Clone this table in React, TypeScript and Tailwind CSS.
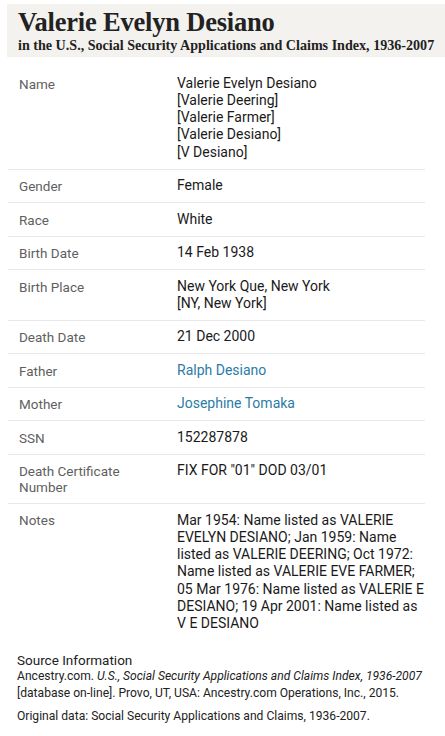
const rows: { label: string; value: string[]; link?: boolean }[] = [
  {
    label: "Name",
    value: [
      "Valerie Evelyn Desiano",
      "[Valerie Deering]",
      "[Valerie Farmer]",
      "[Valerie Desiano]",
      "[V Desiano]",
    ],
  },
  { label: "Gender", value: ["Female"] },
  { label: "Race", value: ["White"] },
  { label: "Birth Date", value: ["14 Feb 1938"] },
  { label: "Birth Place", value: ["New York Que, New York", "[NY, New York]"] },
  { label: "Death Date", value: ["21 Dec 2000"] },
  { label: "Father", value: ["Ralph Desiano"], link: true },
  { label: "Mother", value: ["Josephine Tomaka"], link: true },
  { label: "SSN", value: ["152287878"] },
  { label: "Death Certificate Number", value: ['FIX FOR "01" DOD 03/01'] },
];

const notes =
  "Mar 1954: Name listed as VALERIE EVELYN DESIANO; Jan 1959: Name listed as VALERIE DEERING; Oct 1972: Name listed as VALERIE EVE FARMER; 05 Mar 1976: Name listed as VALERIE E DESIANO; 19 Apr 2001: Name listed as V E DESIANO";

export default function App() {
  return (
    <div className="w-[445px] h-[736px] bg-white overflow-hidden font-['Roboto',Arial,sans-serif]">
      {/* Header */}
      <div className="ml-[7px] mt-[4px] h-[53px] bg-[#f4f2ef] pl-[11px] pt-[3px] text-[#222] font-['Liberation_Serif',serif] font-bold">
        <h1 className="text-[26.5px] leading-[30px] tracking-[-0.2px]">Valerie Evelyn Desiano</h1>
        <p className="whitespace-nowrap text-[14.1px] leading-[17px]">
          in the U.S., Social Security Applications and Claims Index, 1936-2007
        </p>
      </div>

      {/* Record table */}
      <div className="ml-[8px] w-[417px] mt-[10px]">
        {rows.map((r) => (
          <div key={r.label} className="flex border-b border-[#e8e8e8] py-[7.75px]">
            <div className="w-[169px] pl-[11px] pr-3 text-[13.5px] leading-[16px] text-[#5f5f5f] pt-[1px]">
              {r.label}
            </div>
            <div
              className={`flex-1 text-[14px] ${r.value.length > 2 ? "leading-[17.2px]" : "leading-[17px]"} ${
                r.link ? "text-[#2b7ca6]" : "text-[#1a1a1a]"
              }`}
            >
              {r.value.map((v) => (
                <div key={v}>{v}</div>
              ))}
            </div>
          </div>
        ))}
        <div className="flex py-[7.75px]">
          <div className="w-[169px] pl-[11px] text-[13.5px] leading-[16px] text-[#5f5f5f]">Notes</div>
          <div className="flex-1 text-[14px] leading-[17.2px] text-[#1a1a1a]">{notes}</div>
        </div>
      </div>

      {/* Source */}
      <div className="ml-[17px] mt-[12px] pr-3 text-[#222]">
        <div className="text-[13.5px] leading-[16px]">Source Information</div>
        <p className="text-[12.1px] leading-[17px]">
          Ancestry.com. <i>U.S., Social Security Applications and Claims Index, 1936-2007</i> [database on-line].
          Provo, UT, USA: Ancestry.com Operations, Inc., 2015.
        </p>
        <p className="mt-[6px] text-[12.1px] leading-[17px]">
          Original data: Social Security Applications and Claims, 1936-2007.
        </p>
      </div>
    </div>
  );
}
